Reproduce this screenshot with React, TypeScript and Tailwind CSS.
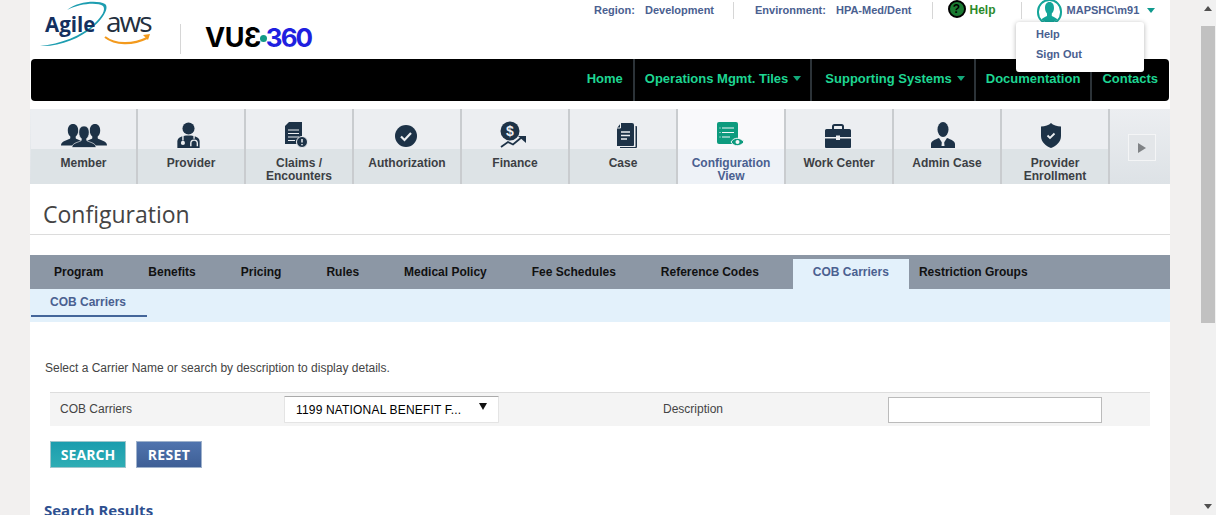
import React from 'react';

const SANS = 'font-["Liberation_Sans",Arial,sans-serif]';
const ICON = '#1d3247';

function Caret({ className }: { className: string }) {
  return (
    <svg className={className} width="8" height="5" viewBox="0 0 8 5">
      <path d="M0 0h8L4 5z" fill="currentColor" />
    </svg>
  );
}

const PERSON =
  'M12 0c3.200 0 5.200 2.600 5.200 6.400 0 2.800-1.100 5-2.500 6.200v1.700c0 .9 5 2 7.200 3.500 1.200.8 2.100 2 2.100 3.700H0c0-1.700.9-2.900 2.100-3.700 2.200-1.500 7.200-2.600 7.200-3.500v-1.700C7.900 11.400 6.800 9.200 6.800 6.400 6.800 2.600 8.800 0 12 0z';

const tileIcons: Record<string, React.ReactNode> = {
  member: (
    <svg width="46" height="24" viewBox="0 0 46 24" fill={ICON}>
      <path d={PERSON} />
      <path d={PERSON} transform="translate(22 0)" />
      <path d={PERSON} transform="translate(11 2)" stroke="#eceef1" strokeWidth="0.700" />
    </svg>
  ),
  provider: (
    <svg width="25" height="26" viewBox="0 0 26 28">
      <circle cx="13" cy="7" r="6.500" fill={ICON} />
      <path d="M1 28v-7c0-4 4-6.500 12-6.500S25 17 25 21v7z" fill={ICON} />
      <path d="M7 15v5M19 15v3" stroke="#eceef1" strokeWidth="1.500" fill="none" />
      <circle cx="7" cy="22.500" r="2.200" fill="#eceef1" />
      <path d="M15.500 26v-3a3.500 3.500 0 0 1 7 0v3" stroke="#eceef1" strokeWidth="1.500" fill="none" />
    </svg>
  ),
  claims: (
    <svg width="24" height="26" viewBox="0 0 24 26">
      <path d="M5 0h13v22H1V4z" fill={ICON} />
      <path d="M4 8h11M4 11.500h11M4 15h11M4 18.500h7" stroke="#eceef1" strokeWidth="1.200" />
      <circle cx="18" cy="20" r="5.500" fill={ICON} stroke="#eceef1" strokeWidth="1" />
      <path d="M18 17v3.500M18 22v1.200" stroke="#eceef1" strokeWidth="1.500" />
    </svg>
  ),
  auth: (
    <svg width="24" height="24" viewBox="0 0 24 24">
      <circle cx="12" cy="12" r="11" fill={ICON} />
      <path d="M7 12.500l3.500 3.500L17 9" stroke="#eceef1" strokeWidth="2.200" fill="none" />
    </svg>
  ),
  finance: (
    <svg width="28" height="27" viewBox="0 0 28 27">
      <circle cx="10" cy="10" r="9.500" fill={ICON} />
      <text x="10" y="15" textAnchor="middle" fontSize="14" fontWeight="700" fill="#eceef1" fontFamily="Liberation Sans">$</text>
      <path d="M1 26l7-5 5 2.500 9-7.500" stroke={ICON} strokeWidth="1.800" fill="none" />
      <path d="M18 15h8v7z" fill={ICON} />
    </svg>
  ),
  case: (
    <svg width="21" height="26" viewBox="0 0 21 26">
      <path d="M5 1h11a2 2 0 0 1 2 2v20a1 1 0 0 1-1 1H1V6z" fill={ICON} />
      <path d="M19.500 4h.7a.8.800 0 0 1 .8.800V25a1 1 0 0 1-1 1H4v-1h15.500z" fill={ICON} />
      <path d="M4.500 1v5H0" stroke="#eceef1" strokeWidth="1" fill="none" />
      <path d="M5 10h9M5 13.500h9M5 17h6" stroke="#eceef1" strokeWidth="1.500" />
    </svg>
  ),
  config: (
    <svg width="27" height="26" viewBox="0 0 27 26">
      <rect x="0" y="0" width="21" height="22" rx="2" fill="#0d9b7e" />
      <path d="M5 6h12M5 10.500h12M5 15h8M2.500 6h1M2.500 10.500h1M2.500 15h1" stroke="#f6f7f9" strokeWidth="1" />
      <path d="M14 20c3-5 9-5 13 0-4 5-10 5-13 0z" fill="#0d9b7e" stroke="#f6f7f9" strokeWidth="1" />
      <circle cx="20.500" cy="20" r="2" fill="#f6f7f9" />
    </svg>
  ),
  work: (
    <svg width="26" height="24" viewBox="0 0 26 24">
      <path d="M8 5V2.500A1.500 1.500 0 0 1 9.500 1h7A1.500 1.500 0 0 1 18 2.500V5" stroke={ICON} strokeWidth="2" fill="none" />
      <path d="M0 6.500A1.500 1.500 0 0 1 1.500 5h23A1.500 1.500 0 0 1 26 6.500V13H0z" fill={ICON} />
      <path d="M0 14.500h26V23a1 1 0 0 1-1 1H1a1 1 0 0 1-1-1z" fill={ICON} />
      <rect x="11" y="11.500" width="4" height="4.500" fill="#eceef1" />
    </svg>
  ),
  admin: (
    <svg width="24" height="26" viewBox="0 0 24 26">
      <ellipse cx="12" cy="7.500" rx="5.500" ry="7.500" fill={ICON} />
      <path d="M0 26v-4c0-3 4-4.500 8-6l4 6 4-6c4 1.500 8 3 8 6v4z" fill={ICON} />
      <path d="M11 18h2l.5 6h-3z" fill="#eceef1" />
    </svg>
  ),
  shield: (
    <svg width="22" height="25" viewBox="0 0 22 25">
      <path d="M11 0c2 2 6 3.500 10 3.500V13c0 6-5 10-10 12C6 23 1 19 1 13V3.500C5 3.500 9 2 11 0z" fill={ICON} />
      <path d="M7.500 12.500l2.500 2.500 4.500-4.500" stroke="#eceef1" strokeWidth="1.800" fill="none" />
    </svg>
  ),
};

const tiles = [
  { key: 'member', label: 'Member', nudge: '' },
  { key: 'provider', label: 'Provider', nudge: 'pr-[6px]' },
  { key: 'claims', label: 'Claims / Encounters', nudge: 'pr-[6px]' },
  { key: 'auth', label: 'Authorization', nudge: 'pr-[2px]' },
  { key: 'finance', label: 'Finance', nudge: 'pr-[3px]' },
  { key: 'case', label: 'Case', nudge: 'pl-[6px]' },
  { key: 'config', label: 'Configuration View', nudge: 'pr-[2px]', active: true },
  { key: 'work', label: 'Work Center', nudge: 'pr-[2px]' },
  { key: 'admin', label: 'Admin Case', nudge: 'pr-[8px]' },
  { key: 'shield', label: 'Provider Enrollment', nudge: 'pr-[8px]' },
];

const mainTabs = ['Program', 'Benefits', 'Pricing', 'Rules', 'Medical Policy', 'Fee Schedules', 'Reference Codes'];

function TopBar() {
  return (
    <div className={`relative h-[59px] ${SANS}`}>
      {/* logos */}
      <div className="flex items-start pl-[10px]">
        <div className="relative h-[50px] w-[112px] shrink-0">
          <svg className="absolute left-0 top-0" width="112" height="50" viewBox="0 0 112 50" fill="none">
            <path d="M0 46C20 44 42 36 55 23 62 16 66 10 63 6 58 2 40 3 27 10 38 1 58 0 65 4c5 4-3 16-13 24C40 38 20 47 0 46z" fill="#1d9db0" />
            <path d="M65 37c10 8 28 8 42 1" stroke="#f39a1d" strokeWidth="2.200" fill="none" />
            <path d="M103 35l7-1-2 6z" fill="#f39a1d" />
          </svg>
          <span className="absolute left-[5px] top-[11px] text-[20.5px] font-bold leading-[26px] text-[#14305f] font-['Open_Sans',sans-serif]">Agile</span>
          <span className="absolute left-[66px] top-[5px] text-[28px] leading-[32px] tracking-[-2px] text-[#232f3e] font-['Open_Sans',sans-serif]">aws</span>
        </div>
        <div className="ml-[28px] mt-[24px] h-[30px] w-px bg-[#d6d6d6]" />
        <div className="ml-[24px] mt-[21px] flex items-center text-[27px] font-bold leading-[34px] font-['Inter',sans-serif]">
          <span className="text-black tracking-[-0.5px]">VUƐ</span>
          <span className="mx-[-1px] h-[7px] w-[7px] rounded-full bg-[#139a87]" />
          <span className="text-[26px] text-[#1f1fe0] tracking-[-2px]">360</span>
        </div>
      </div>

      {/* region / user line */}
      <div className="absolute left-[564px] top-0 flex h-[20px] items-center text-[11px] font-bold text-[#4a6090]">
        <span>Region:</span>
        <span className="ml-[10px]">Development</span>
        <span className="ml-[19px] h-[17px] w-px bg-[#d6d6d6]" />
        <span className="ml-[21px]">Environment:</span>
        <span className="ml-[10px]">HPA-Med/Dent</span>
        <span className="ml-[20px] h-[17px] w-px bg-[#d6d6d6]" />
        <span className="ml-[15px] mt-[-3px] flex h-[18px] w-[18px] items-center justify-center rounded-full border-2 border-black bg-[#1a7a32] text-[12px] font-bold leading-none text-black">?</span>
        <span className="ml-[4px] text-[12px] text-[#2b8a2b]">Help</span>
        <span className="ml-[25px] h-[17px] w-px bg-[#d6d6d6]" />
        <span className="relative ml-[15px] mt-[-1px] h-[26px] w-[25px] shrink-0 self-start overflow-hidden rounded-full border-2 border-[#14a599] bg-white">
          <svg className="absolute left-[2px] top-[1px]" width="17" height="22" viewBox="0 0 17 22">
            <path d="M8.500 0c3 0 4.500 2.500 4.500 6 0 2.500-1 4.500-2.200 5.500V14c2 1 5 2 6 4v4H0v-4c1-2 4-3 6-4v-2.500C5 10.500 4 8.500 4 6c0-3.500 1.500-6 4.500-6z" fill="#14a599" />
          </svg>
        </span>
        <span className="ml-[5px] text-[#4a6090]">MAPSHC\m91</span>
        <Caret className="ml-[8px] text-[#0f9a8e]" />
      </div>

      {/* user dropdown */}
      <div className="absolute left-[986px] top-[22px] z-10 flex h-[50px] w-[128px] flex-col rounded-[3px] bg-white pl-[20px] pt-[2px] text-[11px] font-bold leading-[20px] text-[#4a6090] shadow-[0_1px_5px_rgba(0,0,0,0.3)]">
        <span>Help</span>
        <span>Sign Out</span>
      </div>
    </div>
  );
}

function BlackNav() {
  const sep = 'h-full w-[2px] bg-[#2c3338]';
  return (
    <div className={`ml-px flex h-[42px] w-[1138px] items-center justify-end rounded-[4px] bg-black text-[13px] font-bold text-[#1ed692] ${SANS}`}>
      <span className="pb-[3px] pr-[10px]">Home</span>
      <span className={sep} />
      <span className="flex items-center pb-[3px] pl-[10px] pr-[9px]">Operations Mgmt. Tiles<Caret className="ml-[5px] text-[#13a97a]" /></span>
      <span className={sep} />
      <span className="flex items-center pb-[3px] pl-[13px] pr-[9px]">Supporting Systems<Caret className="ml-[5px] text-[#13a97a]" /></span>
      <span className={sep} />
      <span className="pb-[3px] pl-[10px] pr-[10px]">Documentation</span>
      <span className={sep} />
      <span className="pb-[3px] pl-[10px] pr-[11px]">Contacts</span>
    </div>
  );
}

function TileRow() {
  return (
    <div className={`mt-[8px] flex h-[75px] bg-gradient-to-b from-[#eceef1] to-[#dde2e6] pl-px ${SANS}`}>
      {tiles.map((t) => (
        <div key={t.key} className="flex w-[108px] shrink-0 flex-col border-r-2 border-[#c9cccf] first:w-[107px]">
          <div className={`flex h-[40px] items-end justify-center pb-px ${t.nudge} ${t.active ? 'bg-[#f9f9fb]' : 'bg-[#eceef1]'}`}>
            {tileIcons[t.key]}
          </div>
          <div className={`flex h-[35px] justify-center px-[10px] pt-[8px] text-center text-[12px] font-bold leading-[13px] ${t.active ? 'bg-[#eef2f7] text-[#4a6090]' : 'bg-[#dde3e6] text-[#3c3f44]'}`}>
            <span>{t.label}</span>
          </div>
        </div>
      ))}
      <div className="flex flex-1 items-start pl-[18px] pt-[25px]">
        <div className="flex h-[27px] w-[28px] items-center justify-center border border-[#f4f5f6] bg-[#e3e6e9]">
          <svg width="10" height="12" viewBox="0 0 10 12"><path d="M1 1l8 5-8 5z" fill="#808386" /></svg>
        </div>
      </div>
    </div>
  );
}

function Tabs() {
  return (
    <div className={SANS}>
      <div className="flex h-[34px] items-end bg-[#8c97a5] pl-[24px] text-[12px] font-bold text-[#111]">
        {mainTabs.map((t) => (
          <span key={t} className="mr-[45px] h-[30px] pt-[5px] leading-[16px]">{t}</span>
        ))}
        <span className="ml-[-11px] flex h-[30px] w-[116px] justify-center bg-[#e3f1fb] pt-[5px] leading-[16px] text-[#4a6090]">COB Carriers</span>
        <span className="ml-[10px] h-[30px] pt-[5px] leading-[16px]">Restriction Groups</span>
      </div>
      <div className="h-[33px] bg-[#e3f1fb] pl-px">
        <div className="h-[28px] w-[116px] border-b-2 border-[#44669a] pl-[19px] pt-[5px] text-[12px] font-bold leading-[16px] text-[#4a6090]">COB Carriers</div>
      </div>
    </div>
  );
}

function Form() {
  return (
    <div className={`px-[20px] pt-[38px] text-[12px] text-[#444] ${SANS}`}>
      <p className="ml-[-5px] h-[32px] leading-[16px]">Select a Carrier Name or search by description to display details.</p>
      <div className="flex h-[34px] items-center border-t border-[#ddd] bg-[#f4f4f4] pl-[10px]">
        <span className="mt-[-2px] w-[224px]">COB Carriers</span>
        <div className="relative flex h-[27px] w-[215px] items-center rounded-[1px] border border-[#e4e4e4] border-t-[#aaa] bg-white pl-[11px] text-black">
          <span className="tracking-[0.17px]">1199 NATIONAL BENEFIT F...</span>
          <svg className="absolute right-[11px] top-[6px]" width="8" height="7" viewBox="0 0 8 7"><path d="M0 0h8L4 7z" fill="#111" /></svg>
        </div>
        <span className="ml-[164px] mt-[-2px] w-[225px]">Description</span>
        <input aria-label="Description" className="h-[26px] w-[214px] border border-[#bbb] bg-white" />
      </div>
      <div className="mt-[15px] flex gap-[10px] font-['Open_Sans',sans-serif] text-[14px] font-bold text-white">
        <button className="h-[27px] w-[76px] border border-[#9fc6cc] bg-gradient-to-b from-[#1a9dae] to-[#2eadb4] tracking-[0.1px]">SEARCH</button>
        <button className="h-[27px] w-[66px] border border-[#9fb2cc] bg-gradient-to-b from-[#5074ae] to-[#3e5f96] tracking-[0.4px]">RESET</button>
      </div>
      <h2 className="ml-[-6px] mt-[32px] font-['Open_Sans',sans-serif] text-[15px] font-bold leading-[20px] text-[#2e5090]">Search Results</h2>
    </div>
  );
}

function Scrollbar() {
  return (
    <div className="flex h-[515px] w-[16px] shrink-0 flex-col items-center bg-[#f1f1f1]">
      <svg className="mt-[6px]" width="8" height="5" viewBox="0 0 8 5"><path d="M4 0l4 5H0z" fill="#505050" /></svg>
      <div className="mt-[15px] h-[297px] w-[14px] bg-[#c1c1c1]" />
      <svg className="mt-auto mb-[6px]" width="8" height="5" viewBox="0 0 8 5"><path d="M0 0h8L4 5z" fill="#505050" /></svg>
    </div>
  );
}

export default function App() {
  return (
    <div className="flex h-[515px] w-[1216px] overflow-hidden bg-[#f2f0ef]">
      <div className="ml-[30px] mr-[30px] h-[515px] w-[1140px] shrink-0 overflow-hidden bg-white">
        <TopBar />
        <BlackNav />
        <TileRow />
        <div className="flex h-[51px] items-center border-b border-[#dcdcdc] pl-[13px] pt-[10px] font-['Open_Sans',sans-serif] text-[23px] text-[#444]">Configuration</div>
        <div className="h-[20px]" />
        <Tabs />
        <Form />
      </div>
      <Scrollbar />
    </div>
  );
}
